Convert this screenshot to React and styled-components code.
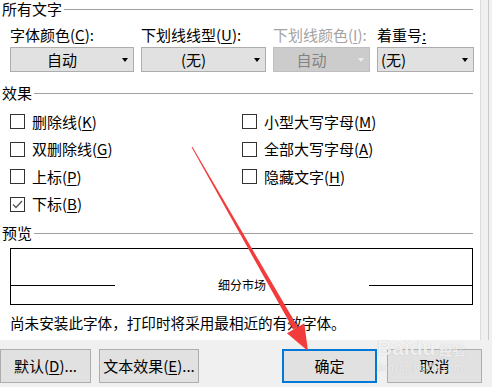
import React from "react"
import styled, { createGlobalStyle } from "styled-components"

const GlobalStyle = createGlobalStyle`
  html, body {
    margin: 0;
    padding: 0;
    background: #f0f0f0;
  }
  body {
    font-family: "Noto Sans CJK SC", "Noto Sans", sans-serif;
    color: #000;
  }
`

const Dialog = styled.div`
  position: relative;
  width: 492px;
  height: 387px;
  overflow: hidden;
  background: #f0f0f0;
  display: flex;
  flex-direction: column;
`

const Body = styled.div`
  display: flex;
  height: 340px;
`

const Panel = styled.div`
  width: 481px;
  box-sizing: border-box;
  background: #fff;
  padding: 0 7px 0 2px;
  border-right: 1px solid #dcdcdc;
`

const Side = styled.div`
  width: 7px;
  border-right: 1px solid #c9c9c9;
`

const Heading = styled.div`
  display: flex;
  align-items: center;
  height: 18px;
  margin-top: ${(p) => p.$top || 0}px;
  font-size: 15px;
  line-height: 18px;
  &::after {
    content: "";
    flex: 1;
    height: 1px;
    margin-left: 2px;
    background: #a0a0a0;
  }
`

const Indent = styled.div`
  padding-left: 8px;
  margin-top: ${(p) => p.$top || 0}px;
`

const FieldGrid = styled.div`
  display: grid;
  grid-template-columns: 124px 125px 97px 97px;
  column-gap: 7px;
  row-gap: 3px;
  margin-top: 8px;
`

const FieldLabel = styled.div`
  font-size: 15px;
  line-height: 18px;
  white-space: nowrap;
  color: ${(p) => (p.$disabled ? "#a3a3a3" : "#000")};
`

const Mn = styled.span`
  text-decoration: underline;
  text-underline-offset: 2px;
`

const Select = styled.div`
  display: flex;
  align-items: center;
  height: 25px;
  box-sizing: border-box;
  border: 1px solid ${(p) => (p.$disabled ? "#bfbfbf" : "#adadad")};
  background: ${(p) => (p.$disabled ? "#cccccc" : "#e1e1e1")};
  color: ${(p) => (p.$disabled ? "#838383" : "#000")};
  font-size: 15px;
`

const SelectValue = styled.span`
  flex: 1;
  text-align: ${(p) => (p.$left ? "left" : "center")};
  padding-left: ${(p) => (p.$left ? "3px" : "0")};
  line-height: 18px;
`

const Caret = styled.span`
  width: 0;
  height: 0;
  margin: 0 5px 0 9px;
  border-left: 3.5px solid transparent;
  border-right: 3.5px solid transparent;
  border-top: 4px solid ${(p) => (p.$disabled ? "#ededed" : "#000")};
`

const CheckGrid = styled.div`
  display: grid;
  grid-template-columns: 232px 1fr;
  grid-auto-rows: 27.5px;
  grid-auto-flow: column;
  grid-template-rows: repeat(4, 27.5px);
`

const CheckRow = styled.label`
  display: flex;
  align-items: center;
  font-size: 15px;
  line-height: 18px;
`

const Box = styled.span`
  width: 15px;
  height: 15px;
  box-sizing: border-box;
  border: 1px solid #333;
  margin-right: 7px;
  display: flex;
  align-items: center;
  justify-content: center;
`

const PreviewBox = styled.div`
  height: 57px;
  box-sizing: border-box;
  border: 1px solid #000;
  padding-top: 27px;
  margin-top: 6px;
`

const SampleRow = styled.div`
  display: flex;
  align-items: center;
  height: 18px;
`

const SampleLine = styled.span`
  width: ${(p) => p.$w}px;
  height: 1px;
  background: #000;
`

const SampleText = styled.span`
  flex: 1;
  text-align: center;
  font-size: 12px;
  line-height: 18px;
`

const Note = styled.div`
  margin-top: 9px;
  font-size: 14.6px;
  line-height: 18px;
`

const Footer = styled.div`
  display: flex;
  padding: 9px 10px 0 0;
`

const ButtonGroup = styled.div`
  display: flex;
  gap: ${(p) => p.$gap}px;
  margin-left: ${(p) => (p.$right ? "auto" : "0")};
`

const Button = styled.div`
  width: ${(p) => p.$w}px;
  height: 34px;
  box-sizing: border-box;
  display: flex;
  align-items: center;
  justify-content: center;
  background: #e1e1e1;
  border: ${(p) => (p.$primary ? "2px solid #0078d7" : "1px solid #adadad")};
  font-size: 15px;
  line-height: 18px;
  white-space: nowrap;
`

const Overlay = styled.svg`
  position: absolute;
  left: 0;
  top: 0;
  pointer-events: none;
`

const Watermark = styled.div`
  position: absolute;
  left: 377px;
  top: 336px;
  color: rgba(255, 255, 255, 0.75);
  text-shadow: 0 0 1px rgba(150, 150, 150, 0.5);
  pointer-events: none;
`

const MarkTitle = styled.div`
  display: flex;
  align-items: baseline;
  gap: 4px;
  font-family: "Liberation Sans", sans-serif;
  font-weight: bold;
  font-size: 21px;
  line-height: 24px;
  span {
    font-family: "Noto Sans CJK SC", sans-serif;
    font-size: 13px;
  }
`

const MarkUrl = styled.div`
  font-family: "Liberation Sans", sans-serif;
  font-size: 10px;
  line-height: 12px;
  letter-spacing: 0.3px;
`

const fields = [
  { label: <>字体颜色(<Mn>C</Mn>):</>, value: "自动" },
  { label: <>下划线线型(<Mn>U</Mn>):</>, value: "(无)" },
  { label: <>下划线颜色(<Mn>I</Mn>):</>, value: "自动", disabled: true },
  { label: <>着重号<Mn>:</Mn></>, value: "(无)", left: true },
]

const effects = [
  { text: "删除线", key: "K" },
  { text: "双删除线", key: "G" },
  { text: "上标", key: "P" },
  { text: "下标", key: "B", checked: true },
  { text: "小型大写字母", key: "M" },
  { text: "全部大写字母", key: "A" },
  { text: "隐藏文字", key: "H" },
]

const Check = () => (
  <svg width="11" height="9" viewBox="0 0 11 9">
    <polyline points="1,4.5 4,7.5 10,1" fill="none" stroke="#555" strokeWidth="1.3" />
  </svg>
)

export default function App() {
  return (
    <Dialog>
      <GlobalStyle />
      <Body>
        <Panel>
          <Heading>所有文字</Heading>
          <Indent>
            <FieldGrid>
              {fields.map((f, i) => (
                <FieldLabel key={i} $disabled={f.disabled}>{f.label}</FieldLabel>
              ))}
              {fields.map((f, i) => (
                <Select key={i} $disabled={f.disabled}>
                  <SelectValue $left={f.left}>{f.value}</SelectValue>
                  <Caret $disabled={f.disabled} />
                </Select>
              ))}
            </FieldGrid>
          </Indent>

          <Heading $top={12}>效果</Heading>
          <Indent $top={6}>
            <CheckGrid>
              {effects.map((e) => (
                <CheckRow key={e.key}>
                  <Box>{e.checked && <Check />}</Box>
                  {e.text}(<Mn>{e.key}</Mn>)
                </CheckRow>
              ))}
            </CheckGrid>
          </Indent>

          <Heading $top={6}>预览</Heading>
          <Indent>
            <PreviewBox>
              <SampleRow>
                <SampleLine $w={104} />
                <SampleText>细分市场</SampleText>
                <SampleLine $w={103} />
              </SampleRow>
            </PreviewBox>
            <Note>尚未安装此字体，打印时将采用最相近的有效字体。</Note>
          </Indent>
        </Panel>
        <Side />
      </Body>

      <Footer>
        <ButtonGroup $gap={8}>
          <Button $w={91}>默认(<Mn>D</Mn>)...</Button>
          <Button $w={100}>文本效果(<Mn>E</Mn>)...</Button>
        </ButtonGroup>
        <ButtonGroup $right $gap={10}>
          <Button $w={95} $primary>确定</Button>
          <Button $w={95}>取消</Button>
        </ButtonGroup>
      </Footer>

      <Watermark>
        <MarkTitle>Baidu<span>经验</span></MarkTitle>
        <MarkUrl>jingyan.baidu.com</MarkUrl>
      </Watermark>

      <Overlay width="492" height="387" viewBox="0 0 492 387">
        <polygon
          points="191.6,147.3 192.4,146.8 297.8,327.1 293.4,329.5"
          fill="#f23c3c"
        />
        <polygon points="308,351 286.9,333.3 304.3,323.3" fill="#f23c3c" />
      </Overlay>
    </Dialog>
  )
}
